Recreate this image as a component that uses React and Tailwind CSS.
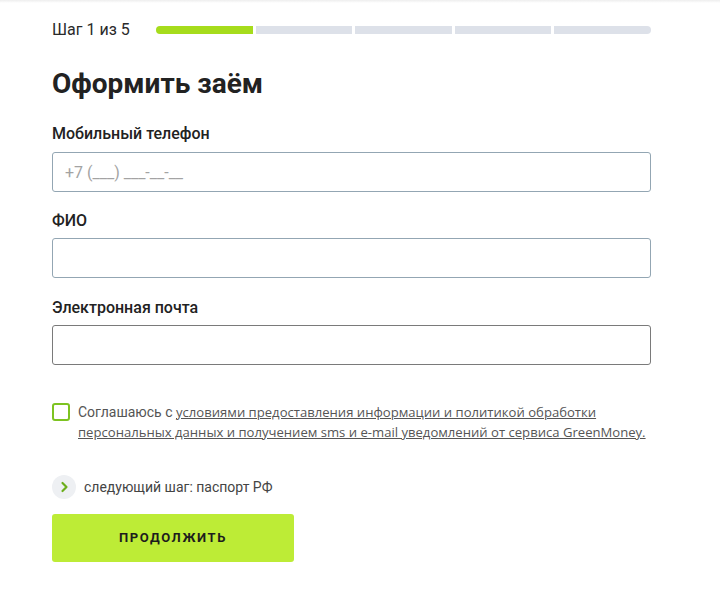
import React, { useState } from "react";

const segments = [true, false, false, false, false];

const App = () => {
  const [agree, setAgree] = useState(false);

  return (
    <div className="min-h-[591px] w-[720px] bg-white font-['Roboto',sans-serif] text-[#222]">
      {/* top shadow */}
      <div className="h-[3px] bg-gradient-to-b from-[#eeeeee] to-white" />

      <div className="w-[599px] ml-[52px] pt-[16px]">
        {/* Step progress */}
        <div className="flex items-center h-[22px]">
          <span className="text-[16px] w-[104px] shrink-0 text-[#2a2a2a]">Шаг 1 из 5</span>
          <div className="flex flex-1 gap-[3px]">
            {segments.map((done, i) => (
              <div
                key={i}
                className={
                  "h-[8px] flex-1 " +
                  (i === 0 ? "rounded-l-full " : "") +
                  (i === 4 ? "rounded-r-full " : "") +
                  (done ? "bg-[#a6dc1c]" : "bg-[#dde1e9]")
                }
              />
            ))}
          </div>
        </div>

        <h1 className="mt-[25px] text-[28px] leading-[36px] font-bold text-[#222]">
          Оформить заём
        </h1>

        {/* Fields */}
        <div className="mt-[22px] flex flex-col">
          <label className="text-[16px] leading-[20px] font-medium">Мобильный телефон</label>
          <input
            className="mt-[8px] h-[40px] w-full rounded-[3px] border border-[#93a6b3] px-[12px] text-[16px] outline-none placeholder:text-[#a3a3a3]"
            placeholder="+7 (___) ___-__-__"
          />

          <label className="mt-[19px] text-[16px] leading-[20px] font-medium">ФИО</label>
          <input className="mt-[7px] h-[40px] w-full rounded-[3px] border border-[#93a6b3] px-[12px] text-[16px] outline-none" />

          <label className="mt-[20px] text-[16px] leading-[20px] font-medium">Электронная почта</label>
          <input className="mt-[7px] h-[40px] w-full rounded-[3px] border border-[#7a7a7a] px-[12px] text-[16px] outline-none" />
        </div>

        {/* Consent */}
        <div className="mt-[37px] flex items-start gap-[8px]">
          <button
            onClick={() => setAgree(!agree)}
            className="mt-[1px] h-[18px] w-[18px] shrink-0 rounded-[3px] border-2 border-[#7dc321] bg-white"
          />
          <p className="text-[14px] leading-[20px] text-[#555] whitespace-nowrap">
            Соглашаюсь с{" "}
            <a href="#" className="underline font-['Open_Sans',sans-serif] text-[13.1px] text-[#555]">
              условиями предоставления информации и политикой обработки
              <br />
              персональных данных и получением sms и e-mail уведомлений от сервиса GreenMoney.
            </a>
          </p>
        </div>

        {/* Next step */}
        <div className="mt-[33px] flex items-center gap-[8px]">
          <div className="h-[24px] w-[24px] rounded-full bg-[#eef0f3] flex items-center justify-center">
            <svg width="14" height="14" viewBox="0 0 14 14" fill="none">
              <path d="M5.5 3 L9.5 7 L5.5 11" stroke="#6cae1c" strokeWidth="2.2" strokeLinecap="round" strokeLinejoin="round" />
            </svg>
          </div>
          <span className="text-[14px] text-[#444]">следующий шаг: паспорт РФ</span>
        </div>

        <button className="mt-[15px] h-[48px] w-[242px] rounded-[3px] bg-[#bdec36] text-[13px] font-bold tracking-[1.6px] text-[#1d1d1d]">
          ПРОДОЛЖИТЬ
        </button>
      </div>
    </div>
  );
};

export default App;
